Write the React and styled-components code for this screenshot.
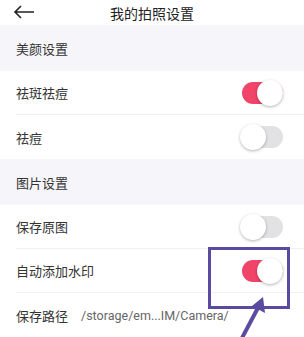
import React from 'react'
import styled, { createGlobalStyle } from 'styled-components'

const GlobalStyle = createGlobalStyle`
  body {
    margin: 0;
    background: #fff;
    font-family: 'Noto Sans CJK SC', 'Noto Sans', sans-serif;
  }
`

const Page = styled.div`
  position: relative;
  width: 304px;
  height: 337px;
  overflow: hidden;
  background: #fff;
`

const Header = styled.div`
  position: relative;
  height: 25px;
  display: flex;
  align-items: center;
  justify-content: center;
  font-size: 14px;
  color: #222;
`

const Back = styled.svg`
  position: absolute;
  left: 13px;
  top: 5px;
`

const Section = styled.div`
  height: 46px;
  display: flex;
  align-items: center;
  padding-left: 16px;
  background: #f6f5fa;
  font-size: 13px;
  color: #333;
`

const Row = styled.div`
  height: 44px;
  margin-left: 16px;
  padding-right: 21px;
  display: flex;
  align-items: center;
  justify-content: space-between;
  font-size: 13px;
  color: #333;
  border-bottom: ${p => (p.$last ? 'none' : '1px solid #f0f0f2')};
  box-sizing: border-box;
`

const Path = styled.span`
  flex: 1;
  margin-left: 13px;
  color: #666;
  font-family: 'Roboto', 'Liberation Sans', sans-serif;
  font-size: 12.5px;
`

const Track = styled.div`
  position: relative;
  width: 41px;
  height: 22px;
  border-radius: 11px;
  background: ${p => (p.$on ? '#f04468' : '#e2e2e4')};
`

const Thumb = styled.div`
  position: absolute;
  top: -2px;
  left: ${p => (p.$on ? '15px' : '-2px')};
  width: 26px;
  height: 26px;
  border-radius: 50%;
  background: #fff;
  box-shadow: 0 1px 3px rgba(0, 0, 0, 0.3);
`

const Mark = styled.div`
  position: absolute;
  left: 208px;
  top: 247px;
  width: 82px;
  height: 62px;
  border: 3px solid #5a4b9e;
  box-sizing: border-box;
`

const Pointer = styled.svg`
  position: absolute;
  left: 230px;
  top: 292px;
`

const Toggle = ({ on }) => (
  <Track $on={on}>
    <Thumb $on={on} />
  </Track>
)

const App = () => (
  <Page>
    <GlobalStyle />
    <Header>
      <Back width='22' height='14' viewBox='0 0 22 14'>
        <path d='M21 7H2M8 1L2 7l6 6' fill='none' stroke='#222' strokeWidth='1.6' />
      </Back>
      我的拍照设置
    </Header>
    <Section>美颜设置</Section>
    <Row>
      祛斑祛痘
      <Toggle on />
    </Row>
    <Row $last>
      祛痘
      <Toggle />
    </Row>
    <Section>图片设置</Section>
    <Row>
      保存原图
      <Toggle />
    </Row>
    <Row>
      自动添加水印
      <Toggle on />
    </Row>
    <Row $last>
      保存路径
      <Path>/storage/em...IM/Camera/</Path>
    </Row>
    <Mark />
    <Pointer width='40' height='46' viewBox='0 0 40 46'>
      <path d='M12 46L30 12' stroke='#5a4b9e' strokeWidth='4' fill='none' />
      <path d='M33 5L35 21L22 14Z' fill='#5a4b9e' />
    </Pointer>
  </Page>
)

export default App
